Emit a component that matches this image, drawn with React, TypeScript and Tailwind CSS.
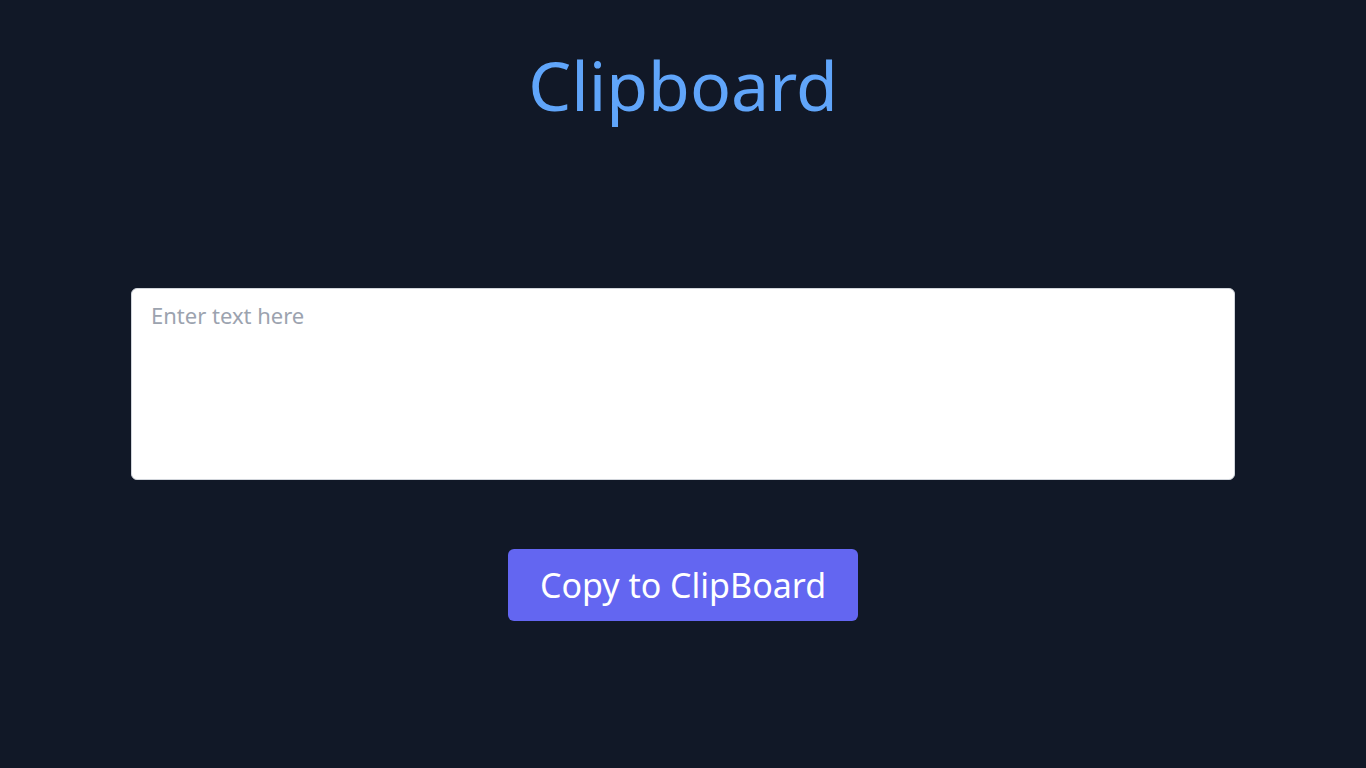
import { useState } from 'react'

const App = () => {
  const [text, setText] = useState('')

  const handleCopy = () => {
    navigator.clipboard?.writeText(text).catch(() => {})
  }

  return (
    <div className="min-h-screen w-full bg-[#111827] flex flex-col items-center font-['Noto_Sans',sans-serif]">
      <h1 className="mt-[51px] text-[68px] leading-none text-[#60a5fa]">Clipboard</h1>

      <textarea
        value={text}
        onChange={e => setText(e.target.value)}
        placeholder="Enter text here"
        className="mt-[169px] w-[1104px] h-[192px] rounded-md border border-[#d1d5db] bg-white px-[19px] py-[10px] text-[22px] leading-[32px] text-gray-800 placeholder:text-[#9ca3af] resize-none outline-none"
      />

      <button
        type="button"
        onClick={handleCopy}
        className="mt-[69px] h-[72px] w-[350px] rounded-md bg-[#6366f1] text-[34px] text-white cursor-pointer"
      >
        Copy to ClipBoard
      </button>
    </div>
  )
}

export default App
